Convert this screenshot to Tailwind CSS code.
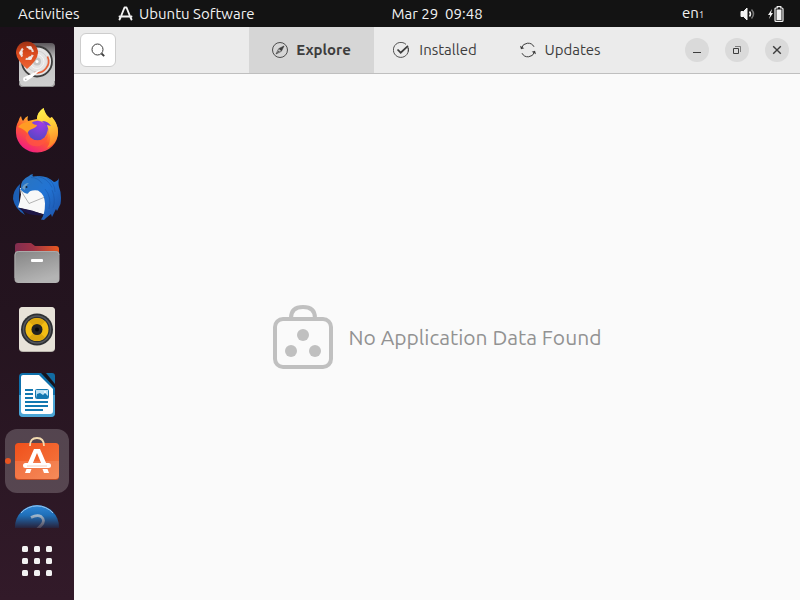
<!DOCTYPE html>
<html lang="en">
<head>
<meta charset="utf-8">
<meta name="viewport" content="width=device-width, initial-scale=1">
<title>Ubuntu Software</title>
<script src="https://cdn.jsdelivr.net/npm/@tailwindcss/browser@4"></script>
</head>
<body class="flex h-screen flex-col overflow-hidden bg-[#241421] font-['Ubuntu','Noto_Sans',sans-serif] text-[15px]">

<!-- System bar -->
<header class="grid h-[27px] shrink-0 grid-cols-[74px_1fr_auto_1fr] items-center bg-[#131313] leading-5 text-[#f2f2f2]">
  <div class="col-span-2 flex items-center whitespace-nowrap pl-[18px]">
    <button class="w-[100px] text-left">Activities</button>
    <button class="flex items-center gap-1.5">
      <svg class="size-[15px]" viewBox="0 0 15 15" fill="none" stroke="currentColor" stroke-width="2" stroke-linecap="round" stroke-linejoin="round"><path d="M3.500 9 6.500 1.500h2L11.500 9M1.500 10.500h12M2.500 11.500 1.500 13.500M12.500 11.500l1 2" stroke-width="1.900"/></svg>
      <span>Ubuntu Software</span>
    </button>
  </div>
  <time class="whitespace-pre">Mar 29  09:48</time>
  <div class="flex items-center justify-end pr-4">
    <button class="mr-9 flex items-baseline">en<span class="text-[9px]">1</span></button>
    <button class="flex items-center gap-3" aria-label="System menu">
      <svg class="h-4 w-[16px]" viewBox="0 0 16 16" fill="none" stroke="currentColor"><path d="M1 5.500h2.500L7 2v12L3.500 10.500H1z" fill="currentColor" stroke-linejoin="round"/><path d="M9.500 5.500q2 2.500 0 5" stroke-width="1.500"/><path d="M11.500 3.500q4 4.500 0 9" opacity=".45" stroke-width="1.500"/></svg>
      <svg class="h-4 w-[16px]" viewBox="0 0 16 16"><path d="M4 3 0 9h2.200L1 13l4-6H3z" fill="currentColor"/><path d="M8 2h1.200V.6h3.600V2H14q1 0 1 1v11.400q0 1-1 1H8q-1 0-1-1V3q0-1 1-1z" fill="none" stroke="currentColor" stroke-width="1.200"/><path d="M8.500 3.500h5V14h-5z" fill="currentColor"/></svg>
    </button>
  </div>
</header>

<div class="flex min-h-0 flex-1">

  <!-- Dock -->
  <nav aria-label="Dock" class="flex w-[74px] shrink-0 flex-col items-center bg-linear-to-b from-[#1c101a] via-[#24141f] to-[#321a29] pt-1.5">
    <div class="flex min-h-0 flex-1 flex-col gap-0.5 overflow-hidden">
      <button aria-label="Install Ubuntu" class="flex size-16 shrink-0 items-center justify-center">
        <svg class="size-12" viewBox="0 0 48 48">
          <defs><linearGradient id="disk" x2="0" y2="1"><stop stop-color="#5a565a"/><stop offset=".35" stop-color="#c3c3c3"/><stop offset="1" stop-color="#cfcfcf"/></linearGradient>
          <linearGradient id="pin" x2="0" y2="1"><stop stop-color="#9c3115"/><stop offset=".4" stop-color="#d8481c"/><stop offset="1" stop-color="#ee6434"/></linearGradient></defs>
          <rect x="6" y="2" width="36" height="44" rx="4" fill="url(#disk)"/>
          <path d="M6.500 40v2q0 3.500 3.500 3.500h28q3.500 0 3.500-3.500v-2" fill="none" stroke="#929292"/>
          <circle cx="24" cy="20.500" r="15" fill="#e4e3e3" stroke="#3d3d3d" stroke-width="1.800"/>
          <circle cx="24" cy="20.500" r="10.500" fill="none" stroke="#d2d0d0"/><circle cx="24" cy="20.500" r="7" fill="none" stroke="#f4f4f4"/>
          <circle cx="24" cy="20.500" r="4" fill="#c4c4c4"/><circle cx="24" cy="20.500" r="1.500" fill="#fff"/>
          <path d="M34.500 15.500a11.500 11.500 0 0 1-13 16" fill="none" stroke="#e86037" stroke-width="1.700"/>
          <path d="M14 28Q3.500 19 3 12a11 11.500 0 0 1 22 0Q24.500 19 14 28z" fill="url(#pin)"/>
          <circle cx="14" cy="12" r="6" fill="none" stroke="#e9dcd8" stroke-width="2.200" stroke-dasharray="8.560 4" stroke-dashoffset="-2"/>
          <g fill="#f2eae8"><circle cx="8" cy="12" r="1.900"/><circle cx="17" cy="6.800" r="1.900"/><circle cx="17" cy="17.200" r="1.900"/></g>
          <path d="m28 28.500-9 8-6 4q-4 0-2.500-4l6.500-3z" fill="#fff"/><circle cx="12.800" cy="38.200" r=".8" fill="#aaa"/>
        </svg>
      </button>
      <button aria-label="Firefox" class="flex size-16 shrink-0 items-center justify-center">
        <svg class="size-12" viewBox="0 0 48 48">
          <defs><linearGradient id="fox" x1=".8" y1="0" x2=".25" y2="1"><stop stop-color="#fff04a"/><stop offset=".35" stop-color="#ffb52e"/><stop offset=".62" stop-color="#ff5a32"/><stop offset="1" stop-color="#ee168a"/></linearGradient>
          <radialGradient id="globe" cx=".65" cy=".15" r=".9"><stop stop-color="#a03be8"/><stop offset="1" stop-color="#5547c4"/></radialGradient>
          <linearGradient id="flame" x2=".2" y2="1"><stop stop-color="#fff44f"/><stop offset=".5" stop-color="#ffcf3a"/><stop offset="1" stop-color="#ff8a2a"/></linearGradient></defs>
          <path d="M5.500 14Q6 11 8 9q.5 3 2 5 2-4 5-5-1 3 0 5l9-2Q24 7 30.500 1q2 7 6.500 10l2-1q6 7 6 15a21 20 0 0 1-42 1Q2.500 19 5.500 14z" fill="url(#fox)"/>
          <path d="M24 12q0-7 6.500-11 2 8 7 12.500L38.500 10q9 10 5.500 20-3 8-10 11 6-9 1-18-3-7-11-11z" fill="url(#flame)"/>
          <circle cx="24.500" cy="23.500" r="9.800" fill="url(#globe)"/>
          <path d="M5 20q3-4 9-5l4-1 1 2q2 2 5 2 0 2-5 4-4 1-4.500 5Q13 23 5 20z" fill="#ff9c24"/>
          <path d="M29 14q6 0 9 5l-4-1q2 4 1 8-1-7-6-12z" fill="#7c3bdc"/>
          <path d="M14.500 25q1 8 10 8.500 8 0 10-6.500 1 9-8 12-11 2-14-8z" fill="#ff5540" opacity=".75"/>
        </svg>
      </button>
      <button aria-label="Thunderbird" class="flex size-16 shrink-0 items-center justify-center">
        <svg class="size-12" viewBox="0 0 48 48">
          <defs><linearGradient id="bird" x2="1" y2="1"><stop stop-color="#2b74bd"/><stop offset=".5" stop-color="#2274d4"/><stop offset="1" stop-color="#1c4fa6"/></linearGradient></defs>
          <path d="M7 11Q0 17 0 26q2 10 12 16-6-8-6-18z" fill="#1c5fb6"/>
          <path d="M7 15 27 12q7 10 5 29.500L5 34.500q2-5 3-13z" fill="#f8f8f8"/>
          <path d="m7.500 17 8.500 13.500L32 24" fill="none" stroke="#aaa" stroke-width=".9"/>
          <path d="m5 34.500 14 3 13 4.500-5 .5q-14 0-22-8z" fill="#1d1645"/>
          <path d="M8 16Q7 7 16 3q1-1.500 4-2-1 1.500 0 2.500Q33 1 41 9q4-1 5-4-1 5 0 9 3 7 1.500 17L44 38l-1-2-4 8-1-3-5 4-2 2-3-.5q4-5 4-16 0-9-7-13-8-1-10 3-3 1-8-4.500z" fill="url(#bird)"/>
          <path d="M9 15q2-5 7-5-4 3-4 7z" fill="#6f9ec4"/><circle cx="13.500" cy="14" r="1" fill="#152437"/>
          <path d="M18 4.500q7 0 11 6M25 3.500q10 2 14 11M34 5q8 5 8 14M32 16q7 8 4 20M39 17q4 9 1 18" stroke="#154c9c" stroke-width=".7" fill="none" opacity=".6"/>
        </svg>
      </button>
      <button aria-label="Files" class="flex size-16 shrink-0 items-center justify-center">
        <svg class="size-12" viewBox="0 0 48 48">
          <defs><linearGradient id="tab"><stop stop-color="#812e50"/><stop offset=".4" stop-color="#9d3246"/><stop offset="1" stop-color="#e95920"/></linearGradient><linearGradient id="folder" x2=".4" y2="1"><stop stop-color="#858585"/><stop offset="1" stop-color="#b4b4b4"/></linearGradient></defs>
          <path d="M2 15V7q0-3 3-3h13l4 3h21q3 0 3 3v6z" fill="url(#tab)"/>
          <rect x="1.500" y="12" width="45" height="32" rx="4" fill="url(#folder)"/>
          <path d="M2 39v-23q0-3.500 3.500-3.500h37q3.500 0 3.500 3.500" fill="none" stroke="#aaa"/>
          <rect x="18" y="20" width="12" height="3" rx="1" fill="#fff"/>
        </svg>
      </button>
      <button aria-label="Rhythmbox" class="flex size-16 shrink-0 items-center justify-center">
        <svg class="size-12" viewBox="0 0 48 48">
          <rect x="6" y="2" width="36" height="45" rx="4" fill="#b9b5ad"/><rect x="6" y="2" width="36" height="44" rx="4" fill="#e7e2d8"/>
          <circle cx="24" cy="24.500" r="16" fill="#2d2f32"/><circle cx="24" cy="24.500" r="13.500" fill="none" stroke="#55585d" stroke-width="1.500"/>
          <circle cx="24" cy="24.500" r="11.500" fill="#f3bd13"/><path d="M24 24.500 16 16.500a11.500 11.500 0 0 1 16 0zM24 24.500l8 8a11.500 11.500 0 0 1-16 0z" fill="#dba50e"/>
          <circle cx="24" cy="24.500" r="5.500" fill="#222"/><circle cx="24" cy="24.500" r="2" fill="#08090a"/>
        </svg>
      </button>
      <button aria-label="LibreOffice Writer" class="flex size-16 shrink-0 items-center justify-center">
        <svg class="size-12" viewBox="0 0 48 48">
          <path d="M10 2h19l13 13v27q0 4-4 4H10q-4 0-4-4V6q0-4 4-4z" fill="#0e70ab"/>
          <path d="M6 24h36v18q0 4-4 4H10q-4 0-4-4z" fill="#4aa5d5"/>
          <path d="M10 4h16l14 14v22q0 3-3 3H11q-3 0-3-3V6q0-2 2-2z" fill="#fff"/>
          <path d="M33 2h6q3 0 3 3v8z" fill="#126ca2"/><path d="m28 2 14 15v-3L32 2z" fill="#14151d"/>
          <path d="M12 19h8m-8 4h8m-8 4h8m-8 4h23m-23 4h23m-23 4h18" stroke="#1278b0" stroke-width="2"/>
          <rect x="22.500" y="18.500" width="13" height="9" rx="1" fill="#bce2f4" stroke="#1278b0"/><path d="m23 27 1-4 3-1 3 2 2-2 3 3v2z" fill="#1278b0"/><circle cx="32" cy="21" r="1" fill="#fff"/>
        </svg>
      </button>
      <button aria-label="Ubuntu Software" aria-current="true" class="relative flex size-16 shrink-0 items-center justify-center rounded-xl bg-white/20">
        <span class="absolute left-0 top-[29px] size-1.5 rounded-full bg-[#e95420]"></span>
        <svg class="size-12" viewBox="0 0 48 48">
          <defs><linearGradient id="bag" x2="1" y2="1"><stop stop-color="#f0501b"/><stop offset="1" stop-color="#f47b42"/></linearGradient></defs>
          <rect x="2" y="7" width="44" height="36" rx="3.500" fill="#bd4a24"/><rect x="2" y="6" width="44" height="36" rx="3.500" fill="url(#bag)"/>
          <path d="M2 24h44v14q0 4-4 4H6q-4 0-4-4z" fill="#fff" opacity=".12"/>
          <path d="M17 9q0-8 7-8t7 8" fill="none" stroke="#f2dbb0" stroke-width="1.800"/>
          <path d="M21 12h6l6.500 15h-5L24 16l-4.500 11h-5zM13.500 32h5l-1.500 4h-5zM29.500 32h5l1.500 4h-5z" fill="#fff"/><rect x="10" y="26" width="28" height="5" rx="2.500" fill="#fff"/><path d="M14 29h20" stroke="#f6cfbd"/>
        </svg>
      </button>
      <button aria-label="Help" class="flex size-16 shrink-0 items-center justify-center">
        <svg class="size-12" viewBox="0 0 48 48">
          <defs><linearGradient id="help" gradientUnits="userSpaceOnUse" x1="0" y1="3" x2="0" y2="26"><stop stop-color="#2e86d6"/><stop offset=".4" stop-color="#1f6fb8"/><stop offset="1" stop-color="#281c31"/></linearGradient>
          <linearGradient id="mark" gradientUnits="userSpaceOnUse" x1="0" y1="11" x2="0" y2="25"><stop stop-color="#a9c3d8"/><stop offset="1" stop-color="#4a4254"/></linearGradient></defs>
          <circle cx="24" cy="24" r="22" fill="url(#help)"/><path d="M8 10a21.500 21.500 0 0 1 32 0" fill="none" stroke="#9ccbf2"/>
          <path d="M18 14.500q6-3 10-1 5 4 0 9l-4 4" fill="none" stroke="url(#mark)" stroke-width="2.800"/>
        </svg>
      </button>
    </div>
    <button aria-label="Show Applications" class="flex h-[72px] shrink-0 items-start justify-center pt-[18px]">
      <svg class="size-[30px]" viewBox="0 0 30 30" fill="#f2f2f2"><g id="dots"><rect width="6" height="6" rx="1.500"/><rect x="12" width="6" height="6" rx="1.500"/><rect x="24" width="6" height="6" rx="1.500"/></g><use href="#dots" y="12"/><use href="#dots" y="24"/></svg>
    </button>
  </nav>

  <!-- Application window -->
  <main class="flex min-w-0 flex-1 flex-col bg-[#fafafa] text-[#3d3d3d]">
    <div class="grid h-[47px] shrink-0 grid-cols-[1fr_auto_1fr] border-b border-[#bfbfbf] bg-[#ebebeb]">
      <div class="flex items-center pl-1.5">
        <button aria-label="Search" class="flex h-[34px] w-9 items-center justify-center rounded-md border border-[#cdcdcd] bg-white">
          <svg class="size-4" viewBox="0 0 16 16" fill="none" stroke="currentColor"><circle cx="7.500" cy="7.500" r="5.500"/><path d="m11.500 11.500 2.700 2.700" stroke-width="1.800"/></svg>
        </button>
      </div>
      <div role="tablist" class="grid grid-cols-[125px_122px_129px]">
        <button role="tab" aria-selected="true" class="flex items-center justify-center gap-2 bg-[#d6d6d6] font-bold">
          <svg class="size-4" viewBox="0 0 16 16" fill="none" stroke="currentColor"><circle cx="8" cy="8" r="7.500" stroke-width=".9"/><path d="M12 4 9.300 9.300 4 12l2.700-5.300z" stroke-width=".7"/><path d="M12 4 6.700 6.700 8 8zM12 4 9.300 9.300 8 8zM4 12l3-3.500.8.8z" fill="currentColor" stroke="none"/></svg>
          Explore
        </button>
        <button role="tab" aria-selected="false" class="flex items-center justify-center gap-2.5">
          <svg class="size-4" viewBox="0 0 16 16" fill="none" stroke="currentColor"><path d="M15 5.500A7.500 7.500 0 1 1 13 2.400" stroke-width=".9"/><path d="M15 5.500a7.500 7.500 0 0 1 .3 4" stroke-width=".9"/><path d="m4.500 7.500 3.200 3.200L15 3.800" stroke-width="1.700"/></svg>
          Installed
        </button>
        <button role="tab" aria-selected="false" class="flex items-center justify-center gap-2">
          <svg class="size-4" viewBox="0 0 16 16" fill="none" stroke="currentColor"><path d="M1.500 6a6.800 6.800 0 0 1 12.500-1.200M14.500 10A6.800 6.800 0 0 1 2 11.200" stroke-width="1"/><path d="M0 3.800 1 7.200l3.300-1zM16 12.200 15 8.800l-3.300 1z" fill="currentColor" stroke="none"/></svg>
          Updates
        </button>
      </div>
      <div class="flex items-center justify-end gap-4 pr-[11px]">
        <button aria-label="Minimize" class="flex size-6 items-center justify-center rounded-full bg-[#dadada]"><svg class="size-4" viewBox="0 0 16 16"><path d="M4 10h8v1H4z" fill="currentColor"/></svg></button>
        <button aria-label="Restore" class="flex size-6 items-center justify-center rounded-full bg-[#dadada]"><svg class="size-4" viewBox="0 0 16 16" fill="none" stroke="currentColor"><path d="M4.500 6.500h5v5h-5z"/><path d="M6 4.500h5.500V10" opacity=".6"/></svg></button>
        <button aria-label="Close" class="flex size-6 items-center justify-center rounded-full bg-[#dadada]"><svg class="size-4" viewBox="0 0 16 16" fill="none" stroke="currentColor" stroke-width="1.400"><path d="m4.200 4.200 7.600 7.600m0-7.600-7.600 7.600"/></svg></button>
      </div>
    </div>
    <section class="flex flex-1 items-center justify-center gap-4">
      <svg class="h-16 w-[60px] shrink-0" viewBox="0 0 60 64" fill="none" stroke="#c0c0c0" stroke-width="4"><rect x="2" y="14" width="56" height="48" rx="8"/><path d="M18 13q0-11 12-11t12 11"/><g fill="#c0c0c0" stroke="none"><circle cx="30" cy="30" r="6"/><circle cx="18" cy="46" r="6"/><circle cx="42" cy="46" r="6"/></g></svg>
      <h1 class="whitespace-nowrap text-[21px] leading-7 text-[#929292]">No Application Data Found</h1>
    </section>
  </main>
</div>
</body>
</html>
